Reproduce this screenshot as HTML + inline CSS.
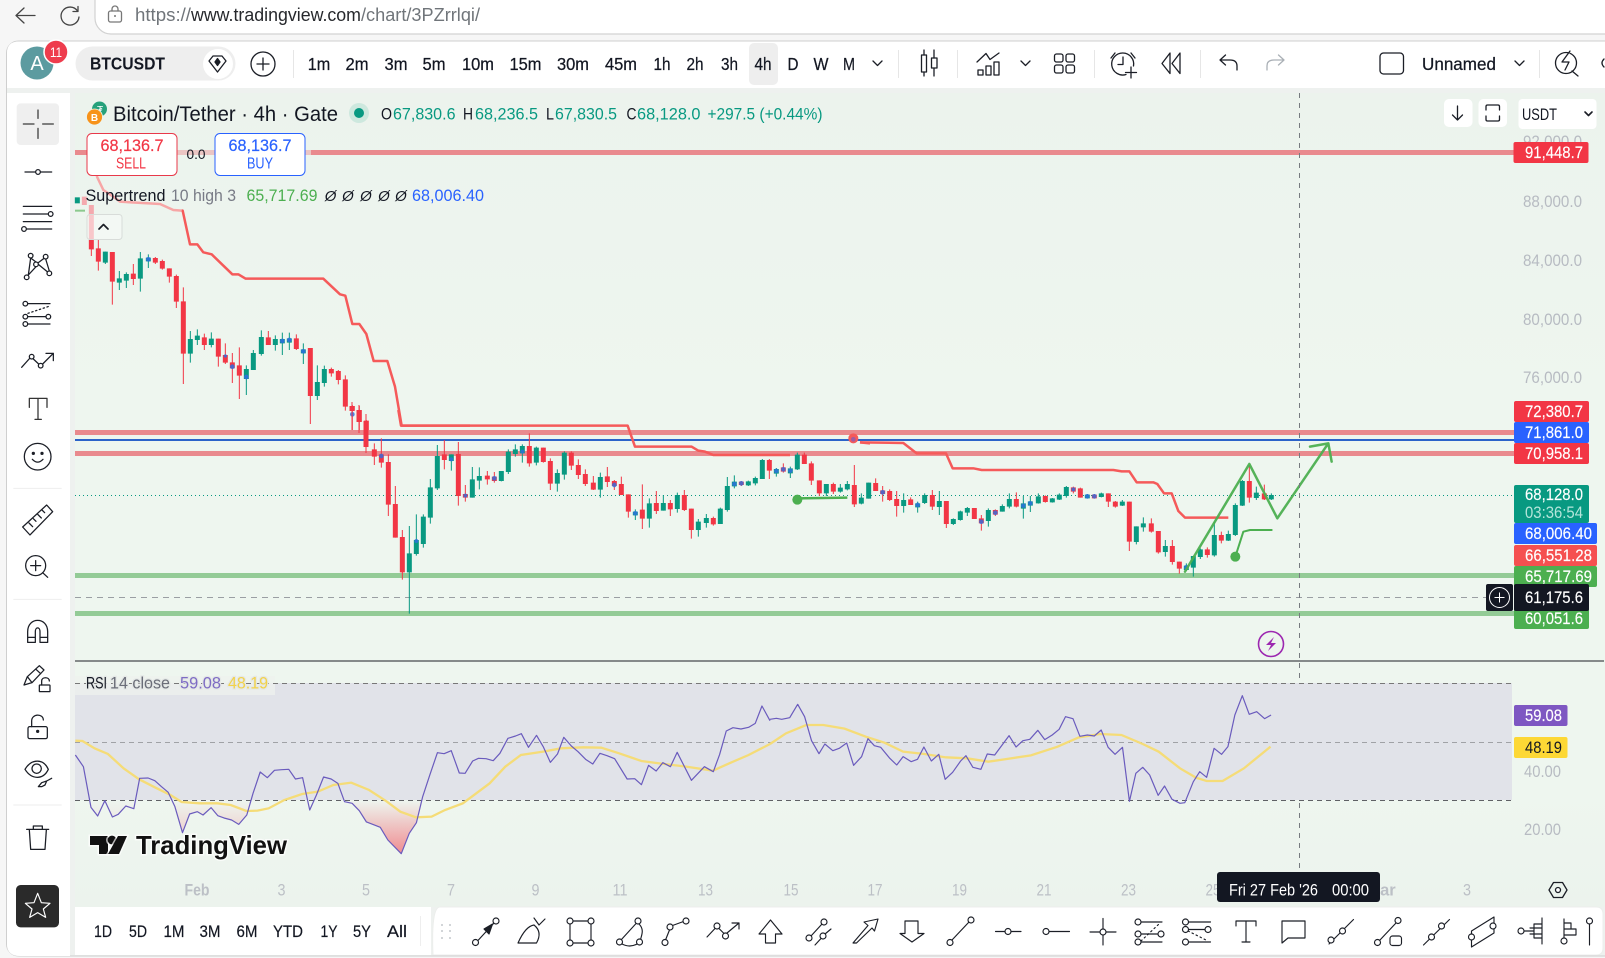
<!DOCTYPE html>
<html lang="en"><head><meta charset="utf-8"><title>BTCUSDT chart</title>
<style>
html,body{margin:0;padding:0;background:#f6f6f6;width:1605px;height:958px;overflow:hidden}
svg{display:block}
text{font-family:"Liberation Sans",sans-serif;fill:#131722}
.tb{font-size:17.5px;text-anchor:middle;stroke:#131722;stroke-width:.25}
.ax{font-size:16.5px;fill:#b7bbc2}
.tm{font-size:16.5px;fill:#bcc0c6;text-anchor:middle}
.pl{font-size:16.5px;fill:#fff;stroke:#fff;stroke-width:.15}
.i{fill:none;stroke:#1b1e26;stroke-width:1.3;stroke-linecap:round;stroke-linejoin:round}
.i circle{fill:#fff}
.ns *{vector-effect:non-scaling-stroke}
.hl{stroke:#e4e8e6;stroke-width:2.5;paint-order:stroke}
</style></head><body>
<svg width="1605" height="958" viewBox="0 0 1605 958" xmlns="http://www.w3.org/2000/svg">
<defs><linearGradient id="rf" gradientUnits="userSpaceOnUse" x1="0" y1="451" x2="0" y2="611"><stop offset="0" stop-color="#f23645" stop-opacity="0"/><stop offset="1" stop-color="#f23645" stop-opacity=".55"/></linearGradient>
<linearGradient id="cb" x1="0" y1="0" x2="0" y2="1"><stop offset="0" stop-color="#ecf3ed"/><stop offset=".4" stop-color="#eef6ef"/><stop offset=".85" stop-color="#eef6ef"/><stop offset="1" stop-color="#ecf3ed"/></linearGradient></defs>

<!-- browser chrome -->
<rect width="1605" height="958" fill="#f6f6f6"/>
<rect x="95" y="-20" width="1530" height="54" rx="16" fill="#fff" stroke="#d2d2d2" stroke-width="1.2"/>
<g class="i" style="stroke:#444"><path d="M16 15.5H35M24 8L16 15.5L24 23"/><path d="M77.5 11A9 9 0 1 0 79 17"/><path d="M78 6.5V11.5H73"/>
<rect x="108.500" y="11" width="13" height="11" rx="2" style="stroke:#777"/><path d="M112 11V9a3 3 0 0 1 6 0V11" style="stroke:#777"/><circle cx="115" cy="16" r="1" style="fill:#777;stroke:none"/></g>
<text x="135" y="21" font-size="18" textLength="56" lengthAdjust="spacingAndGlyphs" style="fill:#70757a">https://</text>
<text x="191" y="21" font-size="18" textLength="170" lengthAdjust="spacingAndGlyphs" style="fill:#26282c">www.tradingview.com</text>
<text x="361" y="21" font-size="18" textLength="119" lengthAdjust="spacingAndGlyphs" style="fill:#70757a">/chart/3PZrrlqi/</text>

<!-- main panel -->
<rect x="6.500" y="41" width="1620" height="915" rx="12" fill="#eef1ef" stroke="#cfcfcf"/>
<path d="M7 88V53Q7 41.500 19 41.500H1605V88Z" fill="#fff"/>
<rect x="75" y="93" width="1530" height="814" fill="url(#cb)"/>
<path d="M7 940V93H70V956H20Q7 956 7 944Z" fill="#fff"/>

<!-- header -->
<circle cx="37" cy="63" r="16.500" fill="#5c9ba0"/><text x="37" y="70" font-size="20" text-anchor="middle" style="fill:#fff">A</text>
<circle cx="56" cy="52" r="12" fill="#ee3c4d" stroke="#fff" stroke-width="1.500"/><text x="56" y="57" font-size="14" text-anchor="middle" textLength="12" lengthAdjust="spacingAndGlyphs" style="fill:#fff">11</text>
<rect x="75.500" y="46.500" width="160" height="34" rx="17" fill="#eee"/>
<text x="90" y="69.500" font-size="17.5" font-weight="700" textLength="75" lengthAdjust="spacingAndGlyphs">BTCUSDT</text>
<circle cx="218" cy="64" r="15" fill="#fff"/>
<g class="i"><path d="M209 61L213 56H222L226 61L217.500 72Z"/><path d="M217.500 58.500L220 62L217.500 65.500L215 62Z" style="fill:#1b1e26"/></g>
<g class="i"><circle cx="263" cy="64" r="12"/><path d="M263 58V70M257 64H269"/></g>
<path d="M293.500 50V78M898.500 50V78M957.500 50V78M1094.500 50V78M1200.500 50V78M1539.500 50V78" stroke="#e6e6e6"/>
<rect x="749" y="43" width="29" height="42" rx="5" fill="#eee"/>
<text class="tb" x="319" y="70" textLength="22.500" lengthAdjust="spacingAndGlyphs">1m</text><text class="tb" x="357" y="70" textLength="23" lengthAdjust="spacingAndGlyphs">2m</text><text class="tb" x="396" y="70" textLength="23" lengthAdjust="spacingAndGlyphs">3m</text><text class="tb" x="434" y="70" textLength="23" lengthAdjust="spacingAndGlyphs">5m</text><text class="tb" x="478" y="70" textLength="32" lengthAdjust="spacingAndGlyphs">10m</text><text class="tb" x="525.500" y="70" textLength="32" lengthAdjust="spacingAndGlyphs">15m</text><text class="tb" x="573" y="70" textLength="32" lengthAdjust="spacingAndGlyphs">30m</text><text class="tb" x="621" y="70" textLength="32" lengthAdjust="spacingAndGlyphs">45m</text><text class="tb" x="662" y="70" textLength="17" lengthAdjust="spacingAndGlyphs">1h</text><text class="tb" x="695" y="70" textLength="17" lengthAdjust="spacingAndGlyphs">2h</text><text class="tb" x="729.500" y="70" textLength="17" lengthAdjust="spacingAndGlyphs">3h</text><text class="tb" x="763" y="70" textLength="17" lengthAdjust="spacingAndGlyphs">4h</text><text class="tb" x="793" y="70" textLength="11" lengthAdjust="spacingAndGlyphs">D</text><text class="tb" x="821" y="70" textLength="15" lengthAdjust="spacingAndGlyphs">W</text><text class="tb" x="849" y="70" textLength="12" lengthAdjust="spacingAndGlyphs">M</text>
<text class="tb" x="1459" y="70" textLength="74" lengthAdjust="spacingAndGlyphs">Unnamed</text>
<g class="i">
<path d="M873 61L877.500 65.500L882 61M1021 61L1025.500 65.500L1030 61M1515 61L1519.500 65.500L1524 61"/>
<rect x="921.500" y="55" width="5" height="17"/><path d="M924 50V55M924 72V76"/><rect x="931.500" y="58" width="5.500" height="10"/><path d="M934 50V58M934 68V76"/>
<path d="M977 62L986 53.500L990 59.500L999 53"/><rect x="978" y="70" width="5" height="5"/><rect x="986" y="66" width="5" height="9"/><rect x="994" y="62" width="5" height="13"/>
<rect x="1054.500" y="54" width="8.500" height="8" rx="2"/><rect x="1066" y="54" width="8.500" height="8" rx="2"/><rect x="1054.500" y="65" width="8.500" height="8" rx="2"/><rect x="1066" y="65" width="8.500" height="8" rx="2"/>
<path d="M1126 74.500A11 11 0 1 1 1133.500 66"/><path d="M1123 57V64.500H1118"/><path d="M1111 58L1115 53M1135 58L1131 53"/><path d="M1131 67V78M1125.500 72.500H1136.500"/>
<path d="M1170 53L1162 63.500L1170 73.500ZM1180 53L1172 63.500L1180 73.500Z"/>
<path d="M1237 70V66Q1237 60 1230 60H1220M1225.500 55L1220 60L1225.500 65"/>
<path d="M1267 70V66Q1267 60 1274 60H1284M1278.500 55L1284 60L1278.500 65" style="stroke:#aab0b6"/>
<rect x="1380" y="53" width="23.500" height="21" rx="3.500"/>
<circle cx="1566" cy="63" r="10.500" style="fill:none"/><path d="M1572 71L1578 76"/><path d="M1570 51L1562 62H1569L1565 70" style="fill:#fff"/><path d="M1604 59Q1600 63 1604 67"/>
</g>

<!-- chart lines -->
<g fill="#e98a8e"><rect x="75" y="150" width="1439" height="5"/><rect x="75" y="430" width="1439" height="5"/><rect x="75" y="451" width="1439" height="5"/></g>
<rect x="75" y="439" width="1439" height="2" fill="#2b63c9"/>
<rect x="75" y="573" width="1439" height="5" fill="#93cb96"/><rect x="75" y="611" width="1439" height="5" fill="#93cb96"/>
<path d="M75 495.500H1513" stroke="#089981" stroke-dasharray="1 3"/>
<path d="M75 597.500H1486" stroke="#9a9ea3" stroke-dasharray="6 5"/>

<!-- candles A -->
<g transform="translate(70,190) scale(.33333)" fill="none">
<path stroke="#f23645" stroke-width="3" d="M64 150V198M85 150V242M127 186V344M190 222V285M256 201V222M277 209V239M298 235V278M319 254V354M340 292V582M403 431V480M445 446V530M466 460V522M487 489V579M508 472V627M595 423V465M679 433V480M721 474V702M784 533V560M805 540V583M826 556V662M847 645V720M868 648V720M889 690V720"/>
<path stroke="#089981" stroke-width="3" d="M106 185V222M148 243V300M169 247V294M211 186V305M235 193V234M361 423V518M382 418V465M424 427V472M529 526V615M550 480V540M574 421V497M616 436V482M637 428V495M658 428V480M700 460V522M742 526V630M763 527V590"/>
<path stroke="#f23645" stroke-width="15" d="M64 150V178M85 175V215M127 186V275M190 251V267M256 204V218M277 213V236M298 235V260M319 258V335M340 334V491M403 442V465M445 446V500M466 495V518M487 517V535M508 526V557M595 442V465M679 445V477M721 474V618M784 537V550M805 543V570M826 568V650M847 648V662M868 660V696M889 692V720"/>
<path stroke="#089981" stroke-width="15" d="M106 185V218M148 265V278M169 252V272M211 205V266M235 203V214M361 447V491M382 437V450M424 446V465M529 537V567M550 489V540M574 441V492M616 447V465M637 447V460M658 445V458M700 478V490M742 576V618M763 537V579"/>
<path stroke="#f4a9ae" stroke-width="15" d="M43 20V45M64 45V150"/><path stroke="#089981" stroke-width="15" d="M22 22V40"/>
<path stroke="#8cc98e" stroke-width="6" d="M15 62H45"/>
<g fill="#2f6fe0" fill-opacity=".85"><circle cx="235" cy="208" r="7"/><circle cx="466" cy="498" r="5"/><circle cx="487" cy="530" r="7"/><circle cx="529" cy="561" r="7"/><circle cx="637" cy="453" r="7"/><circle cx="658" cy="450" r="7"/><circle cx="700" cy="484" r="7"/><circle cx="847" cy="673" r="7"/></g>
</g>
<path d="M352 402V430M359 405V433M366 414V453" stroke="#f23645"/>
<path d="M352 406V411M359 410V422M366 421V447" stroke="#f23645" stroke-width="5"/>

<!-- candles B -->
<g transform="translate(370,410) scale(.33333)" fill="none">
<path stroke="#f23645" stroke-width="3" d="M13 100V165M34 85V173M55 133V318M76 228V383M97 360V509M223 90V178M265 96V287M286 225V275M352 183V224M373 186V218M478 70V170M520 113V158M541 145V240M604 124V180M625 148V207M646 178V228M670 198V240M712 171V231M733 210V240M754 200V255M775 253V323M817 223V357M859 243V312M901 270V318M943 240V303M964 296V386M1030 320V347M1114 213V228M1198 147V207M1240 160V188M1303 128V162M1324 154V225M1348 211V258M1390 218V252M1453 165V291"/>
<path stroke="#089981" stroke-width="3" d="M118 348V611M139 313V437M160 313V413M181 207V341M202 105V240M244 133V182M307 171V263M328 172V238M394 183V214M415 118V192M436 103V140M457 103V158M499 110V166M562 178V245M583 124V209M691 188V263M796 298V330M838 265V353M880 255V302M922 248V308M985 327V380M1009 312V353M1051 293V342M1072 201V305M1093 196V235M1135 212V228M1156 200V226M1177 147V207M1219 174V200M1261 170V204M1282 128V180M1369 222V258M1411 222V248M1432 213V241M1474 250V283"/>
<path stroke="#f23645" stroke-width="15" d="M13 118V140M34 133V158M55 156V284M76 282V383M97 381V487M223 133V150M265 132V258M286 252V263M352 197V208M373 200V213M478 108V160M520 113V156M541 153V221M604 128V167M625 165V195M646 192V222M670 218V239M712 199V216M733 213V228M754 222V255M775 253V305M817 299V326M859 279V303M901 279V298M943 255V300M964 296V360M1030 324V343M1114 215V225M1198 150V182M1240 172V185M1303 134V162M1324 160V212M1348 211V250M1390 222V245M1453 225V283"/>
<path stroke="#089981" stroke-width="15" d="M118 430V487M139 390V432M160 320V402M181 232V323M202 138V235M244 133V153M307 208V263M328 198V212M394 183V213M415 125V186M436 118V132M457 108V130M499 113V158M562 189V221M583 128V194M691 201V239M796 305V316M838 280V326M880 279V302M922 255V297M985 335V360M1009 324V339M1051 296V342M1072 228V300M1093 215V229M1135 214V226M1156 204V220M1177 150V207M1219 177V191M1261 175V190M1282 134V178M1369 222V250M1411 233V245M1432 222V238M1474 263V281"/>
<g fill="#2f6fe0" fill-opacity=".8"><circle cx="34" cy="138" r="7"/><circle cx="139" cy="393" r="6"/><circle cx="244" cy="148" r="6"/><circle cx="286" cy="257" r="6"/><circle cx="373" cy="205" r="7"/><circle cx="457" cy="125" r="6"/><circle cx="733" cy="225" r="7"/><circle cx="796" cy="310" r="7"/><circle cx="1093" cy="222" r="7"/><circle cx="1114" cy="220" r="7"/><circle cx="1219" cy="183" r="7"/><circle cx="1240" cy="178" r="7"/><circle cx="1261" cy="182" r="7"/></g>
<path stroke="#f55a5a" stroke-width="7.500" stroke-linejoin="round" d="M85 0L93 47H773L795 110H965L985 122L1005 125L1030 135H1260M1470 97L1500 100"/>
<circle cx="1450" cy="85" r="15" fill="#f55a5a"/><circle cx="1450" cy="88" r="7" fill="#7a5bc0" fill-opacity=".7"/>
<circle cx="1282" cy="269" r="15" fill="#4caf50"/><path stroke="#4caf50" stroke-width="7.500" d="M1282 265L1432 263"/>
</g>

<!-- candles C -->
<g transform="translate(860,410) scale(.33333)" fill="none">
<path stroke="#f23645" stroke-width="3" d="M47 205V243M68 228V275M89 238V273M110 243V320M152 262V285M217 240V300M259 273V354M343 294V327M364 315V362M406 298V318M469 247V292M556 256V278M640 230V250M661 233V263M703 252V266M745 250V291M766 273V293M808 275V423M874 325V368M895 363V431M937 390V464M958 455V491M1042 412V443M1084 365V400M1168 165V278M1213 224V270"/>
<path stroke="#089981" stroke-width="3" d="M26 218V266M131 250V308M173 275V308M194 250V282M238 243V315M280 325V345M301 302V332M322 291V318M385 295V350M427 283V305M448 250V295M490 258V326M511 258V306M535 250V281M577 264V278M598 250V270M619 228V263M682 252V266M724 248V262M787 270V288M829 349V403M850 322V365M916 390V440M979 460V483M1000 438V500M1021 415V447M1063 335V440M1105 362V393M1126 280V378M1147 210V288M1189 230V270M1234 250V270"/>
<path stroke="#f23645" stroke-width="15" d="M47 219V243M68 241V252M89 243V270M110 267V288M152 268V285M217 255V290M259 273V342M343 294V327M364 325V340M406 300V314M469 267V290M556 258V276M640 232V245M661 235V263M703 254V265M745 250V275M766 275V290M808 275V395M874 340V365M895 363V427M937 408V456M958 455V476M1042 418V435M1084 375V392M1168 213V263M1213 250V268"/>
<path stroke="#089981" stroke-width="15" d="M26 218V266M131 270V288M173 280V292M194 255V279M238 273V291M280 327V342M301 304V330M322 294V308M385 300V333M427 288V305M448 267V290M490 280V296M511 274V287M535 259V280M577 265V277M598 254V269M619 231V258M682 254V265M724 250V261M787 275V287M829 349V396M850 340V352M916 408V426M979 467V480M1000 438V473M1021 418V441M1063 375V436M1105 372V392M1126 285V375M1147 213V287M1189 248V264M1234 255V268"/>
<g fill="#2f6fe0" fill-opacity=".8"><circle cx="68" cy="247" r="7"/><circle cx="173" cy="285" r="7"/><circle cx="364" cy="335" r="7"/><circle cx="406" cy="308" r="7"/><circle cx="490" cy="287" r="7"/><circle cx="511" cy="280" r="7"/><circle cx="640" cy="238" r="6"/><circle cx="682" cy="259" r="7"/><circle cx="703" cy="259" r="7"/><circle cx="979" cy="472" r="7"/></g>
<path stroke="#f55a5a" stroke-width="7.500" stroke-linejoin="round" d="M0 97L130 99L170 130H258L278 175H340L365 180H760L785 184H808L830 217H880L892 222L912 250H935L955 303L975 323H1105"/>
<path stroke="#4caf50" stroke-width="6" stroke-linejoin="round" stroke-linecap="round" d="M1126 440L1150 365L1170 360H1235"/><circle cx="1126" cy="440" r="15" fill="#4caf50"/>
<path stroke="#4caf50" stroke-opacity=".95" stroke-width="7.500" stroke-linejoin="round" stroke-linecap="round" d="M975 485L1168 162L1252 325L1405 100M1350 110L1405 100L1415 155"/>
</g>

<!-- supertrend A -->
<g transform="translate(70,190) scale(.33333)" fill="none" stroke-linejoin="round">
<path stroke="#f7a6a6" stroke-width="7.500" d="M80 -42L100 0L130 20L150 35L270 42L310 60L335 62"/>
<path stroke="#f55a5a" stroke-width="7.500" d="M335 62H338L360 163H382L400 187L425 193L487 253H505L527 266H760L810 313L826 317L847 402H868L889 432L911 513H952L975 590L995 707H1200"/>
</g>

<!-- crosshair vertical -->
<path d="M1299.500 93V872" stroke="#777b80" stroke-dasharray="5 5"/>

<!-- legend -->
<circle cx="99.500" cy="109" r="7.500" fill="#26a17b"/><text x="100" y="113" font-size="10" text-anchor="middle" style="fill:#fff">₮</text>
<circle cx="94.500" cy="117" r="8" fill="#f7931a" stroke="#edf5ee" stroke-width=".8"/><text x="94.500" y="121" font-size="10" font-weight="700" text-anchor="middle" style="fill:#fff">B</text>
<text x="113" y="121" font-size="21" textLength="225" lengthAdjust="spacingAndGlyphs">Bitcoin/Tether · 4h · Gate</text>
<circle cx="359" cy="113" r="10" fill="#cde8de"/><circle cx="359" cy="113" r="5" fill="#089981"/>
<g font-size="16.500">
<text x="381" y="119.500" textLength="11" lengthAdjust="spacingAndGlyphs">O</text><text x="393" y="119.500" textLength="62.500" lengthAdjust="spacingAndGlyphs" style="fill:#089981">67,830.6</text>
<text x="463" y="119.500" textLength="10" lengthAdjust="spacingAndGlyphs">H</text><text x="475" y="119.500" textLength="63" lengthAdjust="spacingAndGlyphs" style="fill:#089981">68,236.5</text>
<text x="546" y="119.500" textLength="8" lengthAdjust="spacingAndGlyphs">L</text><text x="555" y="119.500" textLength="62" lengthAdjust="spacingAndGlyphs" style="fill:#089981">67,830.5</text>
<text x="626.500" y="119.500" textLength="10" lengthAdjust="spacingAndGlyphs">C</text><text x="637" y="119.500" textLength="63.500" lengthAdjust="spacingAndGlyphs" style="fill:#089981">68,128.0</text>
<text x="707.500" y="119.500" textLength="115" lengthAdjust="spacingAndGlyphs" style="fill:#089981">+297.5 (+0.44%)</text>
</g>
<!-- sell buy -->
<rect x="177" y="150" width="38" height="5" fill="#edf5ee" fill-opacity=".55"/><rect x="305" y="150" width="6" height="5" fill="#edf5ee" fill-opacity=".55"/>
<rect x="87" y="133.500" width="90" height="42" rx="5" fill="#fff" stroke="#e8394a"/>
<rect x="215" y="133.500" width="90" height="42" rx="5" fill="#fff" stroke="#2962ff"/>
<text x="132" y="151" font-size="16.500" text-anchor="middle" textLength="63" lengthAdjust="spacingAndGlyphs" style="fill:#f23645;stroke:#f23645;stroke-width:.2">68,136.7</text>
<text x="131" y="168.500" font-size="15.500" text-anchor="middle" textLength="30" lengthAdjust="spacingAndGlyphs" style="fill:#f23645">SELL</text>
<text x="260" y="151" font-size="16.500" text-anchor="middle" textLength="63" lengthAdjust="spacingAndGlyphs" style="fill:#2962ff;stroke:#2962ff;stroke-width:.2">68,136.7</text>
<text x="260" y="168.500" font-size="15.500" text-anchor="middle" textLength="26" lengthAdjust="spacingAndGlyphs" style="fill:#2962ff">BUY</text>
<text x="196" y="159" font-size="14" text-anchor="middle" textLength="19" lengthAdjust="spacingAndGlyphs">0.0</text>
<!-- supertrend legend -->
<g font-size="17">
<text x="85.500" y="201" textLength="80" lengthAdjust="spacingAndGlyphs">Supertrend</text>
<text x="171" y="201" textLength="65" lengthAdjust="spacingAndGlyphs" style="fill:#787b86">10 high 3</text>
<text x="246.500" y="201" textLength="71" lengthAdjust="spacingAndGlyphs" style="fill:#4caf50">65,717.69</text>
<text x="330.600" y="201" text-anchor="middle" style="font-size:15px;font-style:italic">Ø</text><text x="348" y="201" text-anchor="middle" style="font-size:15px;font-style:italic">Ø</text><text x="366" y="201" text-anchor="middle" style="font-size:15px;font-style:italic">Ø</text><text x="384" y="201" text-anchor="middle" style="font-size:15px;font-style:italic">Ø</text><text x="401" y="201" text-anchor="middle" style="font-size:15px;font-style:italic">Ø</text>
<text x="412" y="201" textLength="72" lengthAdjust="spacingAndGlyphs" style="fill:#2962ff">68,006.40</text>
</g>
<rect x="87" y="214.500" width="35" height="25" rx="3" fill="#fff" fill-opacity=".35" stroke="#d8dcd9"/>
<path class="i" d="M99 229L103.500 224.500L108 229" style="stroke-width:1.700"/>

<!-- top-right controls -->
<rect x="1444" y="99" width="28.500" height="28" rx="5" fill="#fff"/><rect x="1478.500" y="99" width="28.500" height="28" rx="5" fill="#fff"/><rect x="1518.500" y="99" width="78" height="30" rx="4" fill="#fff"/>
<g class="i"><path d="M1457.500 106V120M1452.500 115L1457.500 120L1462.500 115"/><path d="M1486 110V106.500Q1486 105 1487.500 105H1498Q1499.500 105 1499.500 106.500V110M1486 116V119.500Q1486 121 1487.500 121H1498Q1499.500 121 1499.500 119.500V116"/><path d="M1585 112L1588.500 115.500L1592 112" style="stroke-width:1.600"/></g>
<text x="1522" y="120" font-size="16.500" textLength="35" lengthAdjust="spacingAndGlyphs">USDT</text>

<!-- price axis -->
<text class="ax" x="1523" y="147" textLength="59" lengthAdjust="spacingAndGlyphs">92,000.0</text><text class="ax" x="1523" y="207" textLength="59" lengthAdjust="spacingAndGlyphs">88,000.0</text><text class="ax" x="1523" y="266" textLength="59" lengthAdjust="spacingAndGlyphs">84,000.0</text><text class="ax" x="1523" y="325" textLength="59" lengthAdjust="spacingAndGlyphs">80,000.0</text><text class="ax" x="1523" y="383" textLength="59" lengthAdjust="spacingAndGlyphs">76,000.0</text>
<rect x="1513.500" y="142" width="75" height="21" rx="2" fill="#f23645"/><text class="pl" x="1525" y="158" textLength="58" lengthAdjust="spacingAndGlyphs">91,448.7</text>
<rect x="1514" y="401" width="75" height="21" rx="2" fill="#f23645"/><text class="pl" x="1525" y="417" textLength="58" lengthAdjust="spacingAndGlyphs">72,380.7</text>
<rect x="1514" y="422" width="75" height="21" rx="2" fill="#2962ff"/><text class="pl" x="1525" y="438" textLength="58" lengthAdjust="spacingAndGlyphs">71,861.0</text>
<rect x="1514" y="443" width="75" height="21" rx="2" fill="#f23645"/><text class="pl" x="1525" y="459" textLength="58" lengthAdjust="spacingAndGlyphs">70,958.1</text>
<rect x="1514" y="485" width="75" height="38" rx="2" fill="#089981"/><text class="pl" x="1525" y="500" textLength="58" lengthAdjust="spacingAndGlyphs">68,128.0</text><text class="pl" x="1525" y="518" textLength="58" lengthAdjust="spacingAndGlyphs" style="fill:#b4e5da;stroke:none">03:36:54</text>
<rect x="1514" y="523" width="83" height="21" rx="2" fill="#2962ff"/><text class="pl" x="1525" y="539" textLength="67" lengthAdjust="spacingAndGlyphs">68,006.40</text>
<rect x="1514" y="545" width="83" height="21" rx="2" fill="#f55050"/><text class="pl" x="1525" y="561" textLength="67" lengthAdjust="spacingAndGlyphs">66,551.28</text>
<rect x="1514" y="566" width="83" height="21" rx="2" fill="#4caf50"/><text class="pl" x="1525" y="582" textLength="67" lengthAdjust="spacingAndGlyphs">65,717.69</text>
<rect x="1514" y="606" width="75" height="23" rx="2" fill="#4caf50"/><text class="pl" x="1525" y="624" textLength="58" lengthAdjust="spacingAndGlyphs">60,051.6</text>
<rect x="1486" y="584" width="27" height="27" rx="2" fill="#131722"/><rect x="1514" y="584" width="75" height="27" rx="2" fill="#131722"/><text class="pl" x="1525" y="603" textLength="58" lengthAdjust="spacingAndGlyphs">61,175.6</text>
<circle cx="1499.500" cy="597.500" r="10" fill="none" stroke="#fff" stroke-width="1"/><path d="M1499.500 592.500V602.500M1494.500 597.500H1504.500" stroke="#fff"/>

<!-- lightning -->
<circle cx="1271" cy="644" r="12.500" fill="#edf5ee" stroke="#9c27b0" stroke-width="1.600"/><path d="M1274 637L1266 645H1271L1268 651L1276 643H1271Z" fill="#9c27b0"/>

<!-- separator + RSI -->
<rect x="75" y="660.500" width="1529" height="1" fill="#1c1f24"/>
<rect x="75" y="683" width="1437" height="117" fill="#e1e3e9"/>
<rect x="75" y="676" width="200" height="19" fill="#eef2ee" fill-opacity=".75"/>
<path d="M75 683.500H1512" stroke="#777" stroke-dasharray="5 4"/><path d="M75 742.500H1512" stroke="#a0a2a6" stroke-dasharray="5 4"/><path d="M75 800.500H1512" stroke="#5f6165" stroke-dasharray="5 4"/>
<text class="hl" x="86" y="688.500" font-size="16.500" textLength="21" lengthAdjust="spacingAndGlyphs">RSI</text>
<text class="hl" x="110" y="688.500" font-size="16.500" textLength="60" lengthAdjust="spacingAndGlyphs" style="fill:#6a6d78">14 close</text>
<text class="hl" x="180" y="688.500" font-size="16.500" textLength="41" lengthAdjust="spacingAndGlyphs" style="fill:#7e6cc4">59.08</text>
<text class="hl" x="228" y="688.500" font-size="16.500" textLength="40" lengthAdjust="spacingAndGlyphs" style="fill:#f2d24a">48.19</text>

<g class="ns" transform="translate(70,650) scale(.44643,.33333)" fill="none">
<polygon fill="url(#rf)" fill-opacity=".3" points="40,451 47,472 62,498 75,451 82,451 95,501 108,493 125,468 143,476 147,451"/>
<polygon fill="url(#rf)" fill-opacity=".55" points="228,451 235,470 252,548 268,492 285,485 298,495 316,473 331,497 345,504 362,510 378,523 396,495 405,451"/>
<polygon fill="url(#rf)" points="612,451 615,455 632,460 648,482 664,516 680,524 695,532 712,570 742,611 760,550 776,518 790,451"/>
<polyline stroke="#f5dc77" stroke-width="2.300" points="12,272 28,273 55,295 85,312 120,355 155,388 190,412 225,435 250,456 290,460 330,460 360,465 395,483 420,482 445,475 480,450 520,432 555,425 590,405 630,398 670,420 710,455 740,485 775,502 810,500 840,480 880,460 940,400 975,350 1010,315 1060,305 1100,295 1150,292 1190,293 1230,310 1280,333 1320,340 1380,350 1440,362 1480,338 1520,315 1568,282"/>
<polyline stroke="#6a5bbd" stroke-width="1.200" stroke-linejoin="round" points="12,315 30,350 47,472 62,498 78,452 95,501 108,493 125,468 143,476 156,385 175,384 190,392 205,410 220,427 235,470 252,548 268,492 285,485 298,495 316,473 331,497 345,504 362,510 378,523 396,495 410,430 426,366 442,383 458,361 474,359 490,358 505,387 521,383 537,480 552,435 568,381 585,387 600,400 615,455 632,460 648,482 664,516 680,524 695,532 712,570 742,611 760,550 776,518 790,440 806,375 823,308 838,311 854,302 872,369 885,370 902,333 915,325 932,326 948,332 963,310 981,265 998,258 1011,251 1027,292 1045,256 1060,290 1076,337 1092,312 1106,262 1123,288 1138,305 1155,328 1171,342 1187,310 1203,317 1220,326 1248,387 1265,386 1280,404 1296,346 1313,363 1328,338 1345,350 1360,307 1392,391 1421,350 1441,365 1455,314 1470,243 1485,233 1503,237 1520,232 1535,220 1550,168 1568,212"/>
</g>
<g class="ns" transform="translate(770,650) scale(.53248,.33333)" fill="none">
<polyline stroke="#f5dc77" stroke-width="2.300" points="0,282 30,250 68,225 100,225 140,236 180,260 215,278 250,305 290,312 330,322 370,325 410,335 440,328 490,316 540,290 580,262 620,252 660,255 700,282 730,305 770,355 800,383 820,393 850,393 890,355 940,290"/>
<polyline stroke="#6a5bbd" stroke-width="1.200" stroke-linejoin="round" points="0,208 12,205 22,208 37,203 52,163 65,200 78,272 92,311 103,282 118,302 130,295 144,279 157,346 172,320 184,266 196,287 208,292 225,325 238,345 250,320 265,335 277,328 289,291 303,333 317,313 329,388 343,367 358,333 368,317 381,352 396,358 408,312 422,315 449,257 462,291 475,272 488,268 503,241 516,269 530,255 543,238 555,200 569,206 582,259 596,255 609,258 622,240 635,292 648,313 662,292 675,454 687,370 700,352 713,375 729,436 741,408 755,448 770,460 779,458 795,395 807,365 820,382 834,295 848,313 860,290 873,195 887,137 900,193 914,185 929,206 941,195"/>
</g>
<rect x="1514" y="705" width="53.500" height="21" rx="2" fill="#7e57c2"/><text class="pl" x="1525" y="721" textLength="37" lengthAdjust="spacingAndGlyphs">59.08</text>
<rect x="1514" y="737" width="53.500" height="21" rx="2" fill="#fdd835"/><text x="1525" y="753" font-size="16.500" textLength="37" lengthAdjust="spacingAndGlyphs">48.19</text>
<text class="ax" x="1524" y="777" textLength="37" lengthAdjust="spacingAndGlyphs">40.00</text><text class="ax" x="1524" y="835" textLength="37" lengthAdjust="spacingAndGlyphs">20.00</text>

<!-- TV logo -->
<g stroke="#fff" stroke-opacity=".7" stroke-width="3" paint-order="stroke">
<path d="M90 836H108V854H99V845H90Z" fill="#111"/><circle cx="112" cy="840" r="4.400" fill="#111"/><path d="M118 836H127L119 854H108Z" fill="#111"/>
</g>
<text x="136" y="854" font-size="26" font-weight="700" textLength="151" lengthAdjust="spacingAndGlyphs" style="fill:#111;stroke:#fff;stroke-opacity:.7;stroke-width:3;paint-order:stroke">TradingView</text>

<!-- time axis -->
<text class="tm" x="197" y="895.500" font-weight="700" textLength="25" lengthAdjust="spacingAndGlyphs">Feb</text><text class="tm" x="281.500" y="895.500" textLength="8" lengthAdjust="spacingAndGlyphs">3</text><text class="tm" x="366" y="895.500" textLength="8" lengthAdjust="spacingAndGlyphs">5</text><text class="tm" x="451" y="895.500" textLength="8" lengthAdjust="spacingAndGlyphs">7</text><text class="tm" x="535.500" y="895.500" textLength="8" lengthAdjust="spacingAndGlyphs">9</text><text class="tm" x="620" y="895.500" textLength="15" lengthAdjust="spacingAndGlyphs">11</text><text class="tm" x="705.500" y="895.500" textLength="15" lengthAdjust="spacingAndGlyphs">13</text><text class="tm" x="791" y="895.500" textLength="15" lengthAdjust="spacingAndGlyphs">15</text><text class="tm" x="875" y="895.500" textLength="15" lengthAdjust="spacingAndGlyphs">17</text><text class="tm" x="959.500" y="895.500" textLength="15" lengthAdjust="spacingAndGlyphs">19</text><text class="tm" x="1044" y="895.500" textLength="15" lengthAdjust="spacingAndGlyphs">21</text><text class="tm" x="1128.500" y="895.500" textLength="15" lengthAdjust="spacingAndGlyphs">23</text><text class="tm" x="1213" y="895.500" textLength="15" lengthAdjust="spacingAndGlyphs">25</text><text class="tm" x="1381" y="895.500" font-weight="700">Mar</text><text class="tm" x="1467" y="895.500" textLength="8" lengthAdjust="spacingAndGlyphs">3</text>
<rect x="1217" y="872" width="163" height="30" rx="3" fill="#131722"/>
<text x="1229" y="895.500" font-size="16.500" textLength="89" lengthAdjust="spacingAndGlyphs" style="fill:#fff">Fri 27 Feb '26</text><text x="1332" y="895.500" font-size="16.500" textLength="37" lengthAdjust="spacingAndGlyphs" style="fill:#fff">00:00</text>
<g class="i"><path d="M1549 890L1553.500 882.500H1562.500L1567 890L1562.500 897.500H1553.500Z"/><circle cx="1558" cy="890" r="2.500"/></g>

<!-- bottom toolbar -->
<path d="M75 907H431V955H75Z" fill="#fff"/>
<path d="M433 955Q431 907 440 907H1596Q1603 907 1603 914V948Q1603 955 1596 955Z" fill="#fff" stroke="#eceeec"/>
<path d="M420.500 916V946" stroke="#eee"/>
<g font-size="17" text-anchor="middle" style="stroke:#131722;stroke-width:.2">
<text x="103" y="937" textLength="18" lengthAdjust="spacingAndGlyphs">1D</text><text x="138" y="937" textLength="18" lengthAdjust="spacingAndGlyphs">5D</text><text x="174" y="937" textLength="21" lengthAdjust="spacingAndGlyphs">1M</text><text x="210" y="937" textLength="21" lengthAdjust="spacingAndGlyphs">3M</text><text x="247" y="937" textLength="21" lengthAdjust="spacingAndGlyphs">6M</text><text x="288" y="937" textLength="30" lengthAdjust="spacingAndGlyphs">YTD</text><text x="329" y="937" textLength="17" lengthAdjust="spacingAndGlyphs">1Y</text><text x="362" y="937" textLength="18" lengthAdjust="spacingAndGlyphs">5Y</text><text x="397" y="937" textLength="20" lengthAdjust="spacingAndGlyphs">All</text></g>
<g fill="#c5c8cc"><circle cx="442" cy="925" r="1"/><circle cx="450" cy="925" r="1"/><circle cx="442" cy="931" r="1"/><circle cx="450" cy="931" r="1"/><circle cx="442" cy="938" r="1"/><circle cx="450" cy="938" r="1"/></g>

<g class="i" style="stroke-width:1.150">
<path d="M477.500 941L494 923"/><path d="M484 929L492.500 924L489 934Z" style="fill:#1b1e26"/><circle cx="475.500" cy="942.500" r="3"/><circle cx="496" cy="921" r="3"/>
<path d="M518 943H536.500C541 935 539 929 534 925C527 926 522 934 518 943Z"/><path d="M534 918L539 925L545 919"/>
<rect x="570" y="921" width="21" height="22"/><circle cx="570" cy="921" r="3"/><circle cx="591" cy="921" r="3"/><circle cx="570" cy="943" r="3"/><circle cx="591" cy="943" r="3"/>
<path d="M636.500 923L621 940M639 924C645 930 641 936 640.500 940M622 944Q630 948 637 944"/><circle cx="638" cy="921" r="3"/><circle cx="619.500" cy="942" r="3"/><circle cx="639.500" cy="942" r="3"/>
<path d="M665.500 940L669.500 930M672.500 925.500L683.500 921.500"/><circle cx="665" cy="942.500" r="3"/><circle cx="670" cy="927" r="3"/><circle cx="686" cy="921" r="3"/>
<path d="M707 937L715 928.500M719 928.500L724 933.500M727 933L739 923M732 923H739V929"/><circle cx="717" cy="926" r="3"/><circle cx="725.500" cy="936" r="3"/>
<path d="M770.500 920L782 934H775.500V943H765.500V934H759Z"/>
<path d="M811 936L822 924M815 945L821 938.500M825 934L831 929"/><circle cx="824" cy="922" r="3"/><circle cx="809" cy="938" r="3"/><circle cx="823" cy="936" r="3"/>
<path d="M853 943H856.500L872 928L874.500 931L878 919L864 922L868 925.500Z"/>
<path d="M905 921H918V933.500H924L912 942L900 933.500H905Z"/>
<path d="M952 940L969 922"/><circle cx="950" cy="942.500" r="3"/><circle cx="971" cy="920" r="3"/>
<path d="M995.500 931.500H1021"/><circle cx="1008" cy="931.500" r="3"/>
<path d="M1049 931.500H1069.500"/><circle cx="1046" cy="931.500" r="3"/>
<path d="M1090 932H1116M1103 918.500V945"/><circle cx="1103" cy="932" r="3"/>
<path d="M1141 922H1162M1141 934H1158M1141 942H1162"/><path d="M1141 941L1160 923" stroke-dasharray="1.500 3"/><circle cx="1138" cy="922" r="3"/><circle cx="1138" cy="934" r="3"/><circle cx="1161" cy="934" r="3"/><circle cx="1138" cy="942" r="3"/>
<path d="M1188.500 922H1210.500M1188.500 929.500H1205M1188.500 942H1210.500"/><path d="M1188 931L1208 941" stroke-dasharray="1.500 3"/><circle cx="1185.500" cy="922" r="3"/><circle cx="1185.500" cy="929.500" r="3"/><circle cx="1208" cy="929.500" r="3"/><circle cx="1185.500" cy="942" r="3"/>
<path d="M1236 926V921H1256V926M1246 921V942M1242 942H1250"/>
<path d="M1282 921H1305V938H1288L1282 943Z"/>
<path d="M1329 944L1353.500 919.500"/><circle cx="1331" cy="940" r="3"/><circle cx="1342.500" cy="931" r="3"/>
<path d="M1379.500 940.500L1396 923"/><circle cx="1377.500" cy="942.500" r="3"/><circle cx="1398" cy="920.500" r="3"/><rect x="1390" y="936" width="11.500" height="9.500" rx="2.500"/>
<path d="M1423.500 945L1449.500 919.500"/><circle cx="1431.500" cy="937" r="3"/><circle cx="1441.500" cy="926" r="3"/>
<path d="M1471.500 931L1494 917V933L1471.500 947Z"/><circle cx="1471.500" cy="937" r="3"/><circle cx="1493" cy="926" r="3"/>
<path d="M1542 918V944M1524 931H1534M1534 924H1542M1534 924V938M1530 928H1542M1530 934H1542M1534 938H1542"/><circle cx="1521" cy="931" r="3"/>
<path d="M1564 919V938M1564 923H1571V929H1564M1564 929H1576V935H1564M1564 935H1571"/><circle cx="1564" cy="941" r="3"/>
<path d="M1589.500 924V945"/><circle cx="1589.500" cy="921" r="3"/>
</g>

<!-- left toolbar -->
<g transform="translate(0,90) scale(.33333)">
<rect x="50" y="40" width="127" height="125" rx="12" fill="#efefef"/>
<g class="i" style="stroke-width:3.800">
<path d="M114 60V85M114 115V145M70 102H102M128 102H160" style="stroke:#3a3a3a"/>
<path d="M75 246H106M122 246H155"/><circle cx="114" cy="246" r="7"/>
<path d="M70 349H155M70 372H143M70 395H155M80 417H155"/><circle cx="152" cy="372" r="7"/><circle cx="72" cy="417" r="7"/>
<path d="M92 504L108 516M92 504L85 555M108 530L85 555M115 523L143 546M137 507L148 543M115 518L132 505"/><circle cx="92" cy="497" r="7"/><circle cx="137" cy="500" r="7"/><circle cx="108" cy="523" r="7"/><circle cx="148" cy="550" r="7"/><circle cx="80" cy="562" r="7"/>
<path d="M84 641H150M84 680H137M84 702H150"/><path d="M84 670L150 648" stroke-dasharray="4 8"/><circle cx="76" cy="641" r="7"/><circle cx="76" cy="680" r="7"/><circle cx="145" cy="680" r="7"/><circle cx="76" cy="702" r="7"/>
<path d="M65 832L90 804M100 807L116 822M128 822L160 790M138 790H160V812"/><circle cx="95" cy="800" r="7"/><circle cx="122" cy="827" r="7"/>
<path d="M88 952V925H141V952M114 925V988M105 988H124" style="stroke:#333"/>
<circle cx="113" cy="1100" r="40"/><path d="M97 1108Q113 1125 129 1108"/><circle cx="100" cy="1090" r="3" style="fill:#1b1e26"/><circle cx="126" cy="1090" r="3" style="fill:#1b1e26"/>
<path d="M140 1245L158 1265L90 1335L68 1311Z"/><path d="M126 1260L134 1268M113 1273L124 1284M100 1286L108 1294M87 1299L98 1310"/>
</g>
<path d="M40 1195H185" stroke="#eee" stroke-width="3"/>
</g>
<g transform="translate(0,520) scale(.33333)">
<g class="i" style="stroke-width:3.800">
<circle cx="107" cy="137" r="30" style="fill:none"/><path d="M107 122V152M92 137H122M128 158L143 172"/>
<path d="M83 367V335C83 290 143 290 143 335V367H120V335C120 320 106 320 106 335V367ZM83 352H106M120 352H143"/>
<path d="M72 495L82 470L118 437L132 450L96 488ZM82 470L96 488M108 448L122 461"/><rect x="118" y="495" width="32" height="20" rx="2"/><path d="M125 495V483C125 470 148 470 148 483"/>
<rect x="84" y="620" width="58" height="36" rx="5"/><path d="M95 620V603C95 580 130 580 130 600"/><circle cx="113" cy="634" r="3" style="fill:#1b1e26"/>
<path d="M75 748C95 715 130 715 145 748C130 780 95 780 75 748Z"/><circle cx="110" cy="746" r="14" style="fill:none"/><path d="M115 800L125 788L140 783L135 795L125 800ZM140 783L155 775"/>
<path d="M80 928H146M100 928V918H127V928M88 930L92 988H135L139 930"/>
</g>
<path d="M40 238H185M40 855H185" stroke="#eee" stroke-width="3"/>
<rect x="48" y="1095" width="129" height="127" rx="14" fill="#2a2a2a"/>
<path d="M113 1120L124 1148L150 1150L130 1167L137 1192L113 1178L89 1192L96 1167L76 1150L102 1148Z" fill="none" stroke="#fff" stroke-width="3.500" stroke-linejoin="round"/>
</g>
</svg>
</body></html>
